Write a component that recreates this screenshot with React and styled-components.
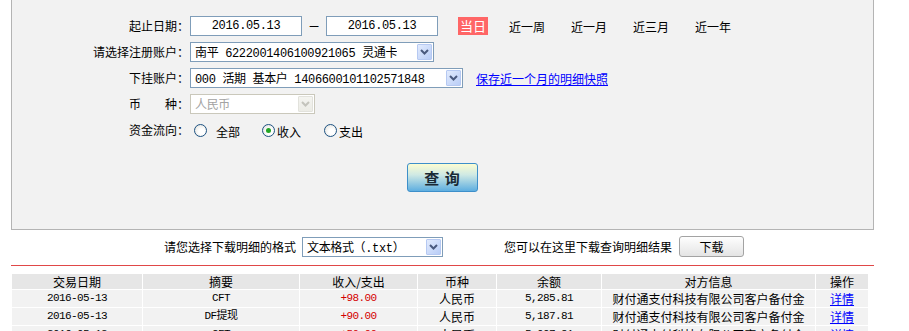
import React from 'react';
import styled, { createGlobalStyle } from 'styled-components';

const GlobalStyle = createGlobalStyle`
  html, body {
    margin: 0;
    padding: 0;
    background: #fff;
    overflow: hidden;
  }
  body {
    font-family: "Noto Sans CJK SC", "Liberation Sans", sans-serif;
    font-size: 12px;
    color: #000;
  }
`;

const rows = [
  { date: '2016-05-13', memo: 'CFT', amount: '+98.00', cur: '人民币', balance: '5,285.81', peer: '财付通支付科技有限公司客户备付金' },
  { date: '2016-05-13', memo: 'DF提现', amount: '+90.00', cur: '人民币', balance: '5,187.81', peer: '财付通支付科技有限公司客户备付金' },
  { date: '2016-05-13', memo: 'CFT', amount: '+50.00', cur: '人民币', balance: '5,097.81', peer: '财付通支付科技有限公司客户备付金' },
];

const Chevron = ({ color }) => (
  <svg width="9" height="6" viewBox="0 0 9 6">
    <polyline points="1,1 4.5,4.5 8,1" fill="none" stroke={color} strokeWidth="2" />
  </svg>
);

const Select = ({ width, disabled, children }) => (
  <SelectBox $width={width} $disabled={disabled}>
    <SelectText $disabled={disabled}>{children}</SelectText>
    <DropBtn $disabled={disabled}>
      <Chevron color={disabled ? '#c4c4bc' : '#4a5a7e'} />
    </DropBtn>
  </SelectBox>
);

const Radio = ({ checked, label, gap }) => (
  <RadioItem>
    <RadioDot $checked={checked} />
    <RadioLabel $gap={gap}>{label}</RadioLabel>
  </RadioItem>
);

const App = () => {
  return (
    <Page>
      <GlobalStyle />
      <Panel>
        <FormGrid>
          <Label>起止日期：</Label>
          <Field>
            <DateInput>2016.05.13</DateInput>
            <Dash>一</Dash>
            <DateInput>2016.05.13</DateInput>
            <Periods>
              <Today>当日</Today>
              <Period>近一周</Period>
              <Period>近一月</Period>
              <Period>近三月</Period>
              <Period>近一年</Period>
            </Periods>
          </Field>

          <Label>请选择注册账户：</Label>
          <Field>
            <Select width={244}>南平 6222001406100921065 灵通卡</Select>
          </Field>

          <Label>下挂账户：</Label>
          <Field>
            <Select width={273}>000 活期 基本户 1406600101102571848</Select>
            <SnapLink href="#">保存近一个月的明细快照</SnapLink>
          </Field>

          <Label>币　　种：</Label>
          <Field>
            <Select width={125} disabled>人民币</Select>
          </Field>

          <Label $top>资金流向：</Label>
          <RadioField>
            <Radio label="全部" gap={9} />
            <Radio label="收入" checked gap={2} />
            <Radio label="支出" gap={2} />
          </RadioField>
        </FormGrid>
        <QueryRow>
          <QueryButton>查 询</QueryButton>
        </QueryRow>
      </Panel>

      <DownloadRow>
        <span>请您选择下载明细的格式</span>
        <Select width={141}>文本格式（.txt）</Select>
        <DownloadHint>您可以在这里下载查询明细结果</DownloadHint>
        <DownloadButton>下载</DownloadButton>
      </DownloadRow>

      <RedLine />

      <Table>
        <colgroup>
          <col style={{ width: 130 }} />
          <col style={{ width: 156 }} />
          <col style={{ width: 117 }} />
          <col style={{ width: 78 }} />
          <col style={{ width: 104 }} />
          <col style={{ width: 213 }} />
          <col style={{ width: 52 }} />
        </colgroup>
        <thead>
          <tr>
            <Th>交易日期</Th>
            <Th>摘要</Th>
            <Th>收入/支出</Th>
            <Th>币种</Th>
            <Th>余额</Th>
            <Th>对方信息</Th>
            <Th>操作</Th>
          </tr>
        </thead>
        <tbody>
          {rows.map((r, i) => (
            <tr key={i}>
              <Td><Num>{r.date}</Num></Td>
              <Td><Num>{r.memo}</Num></Td>
              <Td><Num $red>{r.amount}</Num></Td>
              <Td>{r.cur}</Td>
              <Td><Num>{r.balance}</Num></Td>
              <Td>{r.peer}</Td>
              <Td><DetailLink href="#">详情</DetailLink></Td>
            </tr>
          ))}
        </tbody>
      </Table>
    </Page>
  );
};

const Page = styled.div`
  margin-left: 11px;
  width: 863px;
`;

const Panel = styled.div`
  background: #f2f2f2;
  border: 1px solid #b4b4b4;
  border-top: none;
  padding-top: 16px;
  height: 213px;
`;

const FormGrid = styled.div`
  display: grid;
  grid-template-columns: 177px 1fr;
  column-gap: 1px;
  row-gap: 6px;
  grid-auto-rows: 20px;
`;

const Label = styled.div`
  text-align: right;
  line-height: ${p => (p.$top ? '16px' : '20px')};
  margin-top: ${p => (p.$top ? '2px' : '0')};
  white-space: nowrap;
`;

const Field = styled.div`
  display: flex;
  align-items: center;
  height: 20px;
`;

const DateInput = styled.div`
  box-sizing: border-box;
  width: 112px;
  height: 20px;
  border: 1px solid #7f9db9;
  background: #fff;
  text-align: center;
  font-family: "Liberation Mono", monospace;
  font-size: 12px;
  letter-spacing: -0.35px;
  line-height: 18px;
`;

const Dash = styled.span`
  width: 24px;
  text-align: center;
  font-size: 12px;
  transform: scaleX(0.8);
`;

const Periods = styled.div`
  display: flex;
  align-items: center;
  margin-left: 20px;
  gap: 21px;
`;

const Today = styled.span`
  display: inline-block;
  width: 30px;
  height: 18px;
  line-height: 18px;
  text-align: center;
  background: #ff6666;
  color: #fff;
  font-size: 13px;
`;

const Period = styled.span`
  font-size: 12px;
  width: 37px;
  margin-right: 4px;
  color: #000;
`;

const SelectBox = styled.div`
  box-sizing: border-box;
  width: ${p => p.$width}px;
  height: 20px;
  border: 1px solid ${p => (p.$disabled ? '#cac8bb' : '#7f9db9')};
  background: #fff;
  display: flex;
  align-items: center;
  justify-content: space-between;
  padding: 0 1px 0 4px;
`;

const SelectText = styled.span`
  font-family: "Liberation Mono", "Noto Sans CJK SC", monospace;
  font-size: 12px;
  letter-spacing: -0.35px;
  color: ${p => (p.$disabled ? '#a3a3a3' : '#000')};
  white-space: nowrap;
  overflow: hidden;
`;

const DropBtn = styled.span`
  box-sizing: border-box;
  flex: none;
  width: 15px;
  height: 16px;
  border: 1px solid ${p => (p.$disabled ? '#e2e2dc' : '#b6c9f2')};
  border-radius: 1px;
  background: ${p =>
    p.$disabled
      ? 'linear-gradient(#f4f4f0, #ecece6)'
      : 'linear-gradient(135deg, #e2ebfd, #b9cdf7)'};
  display: flex;
  align-items: center;
  justify-content: center;
`;

const SnapLink = styled.a`
  margin-left: 13px;
  color: #0000ff;
  text-decoration: underline;
  font-size: 12px;
`;

const RadioField = styled.div`
  display: flex;
  align-items: center;
  height: 20px;
  padding-left: 4px;
`;

const RadioItem = styled.span`
  display: flex;
  align-items: center;
  width: 68px;
  &:nth-child(2) { width: 62px; }
`;

const RadioDot = styled.span`
  box-sizing: border-box;
  position: relative;
  width: 13px;
  height: 13px;
  border-radius: 50%;
  border: 1px solid #1d5282;
  background: radial-gradient(circle at 60% 60%, #ffffff 30%, #dcdcd6 100%);
  &::after {
    content: '';
    display: ${p => (p.$checked ? 'block' : 'none')};
    position: absolute;
    left: 3px;
    top: 3px;
    width: 5px;
    height: 5px;
    border-radius: 50%;
    background: #22a524;
  }
`;

const RadioLabel = styled.span`
  margin-left: ${p => p.$gap}px;
  margin-top: 3px;
  font-size: 12px;
`;

const QueryRow = styled.div`
  display: flex;
  justify-content: center;
  margin-top: 23px;
`;

const QueryButton = styled.button`
  width: 71px;
  height: 29px;
  border: 1px solid #3d8fca;
  border-radius: 3px;
  background: linear-gradient(#fcfdd2 0%, #cfe9e4 40%, #5eaee0 100%);
  font-family: "Noto Sans CJK SC", sans-serif;
  font-size: 15px;
  font-weight: bold;
  color: #1a2a36;
  letter-spacing: 1px;
  padding: 0;
`;

const DownloadRow = styled.div`
  display: flex;
  align-items: center;
  height: 21px;
  margin-top: 6px;
  padding-left: 153px;
  font-size: 12px;
  & > span:first-child { margin-right: 6px; }
`;

const DownloadHint = styled.span`
  margin-left: 61px;
  margin-right: 7px;
`;

const DownloadButton = styled.button`
  width: 65px;
  height: 21px;
  border: 1px solid #a3a3a3;
  border-radius: 3px;
  background: linear-gradient(#fefefe, #e4e4e4);
  font-family: "Noto Sans CJK SC", sans-serif;
  font-size: 12px;
  padding: 0;
  color: #000;
`;

const RedLine = styled.div`
  height: 1px;
  background: #e04848;
  margin-top: 8px;
`;

const Table = styled.table`
  margin-top: 7px;
  width: 858px;
  table-layout: fixed;
  border-collapse: separate;
  border-spacing: 1px;
  background: #fff;
  font-size: 12px;
`;

const Th = styled.th`
  background: #e6e6e6;
  font-weight: normal;
  height: 15px;
  line-height: 15px;
  padding: 0;
  text-align: center;
  vertical-align: middle;
`;

const Td = styled.td`
  box-sizing: border-box;
  background: #f2f2f2;
  height: 17px;
  line-height: 17px;
  padding: 0;
  text-align: center;
  vertical-align: middle;
  white-space: nowrap;
  overflow: hidden;
`;

const Num = styled.span`
  display: inline-block;
  vertical-align: top;
  line-height: 17px;
  height: 17px;
  font-family: "Liberation Mono", "Noto Sans CJK SC", monospace;
  font-size: 11px;
  letter-spacing: -0.6px;
  color: ${p => (p.$red ? '#d40000' : '#000')};
`;

const DetailLink = styled.a`
  color: #0000ff;
  text-decoration: underline;
`;

export default App;
